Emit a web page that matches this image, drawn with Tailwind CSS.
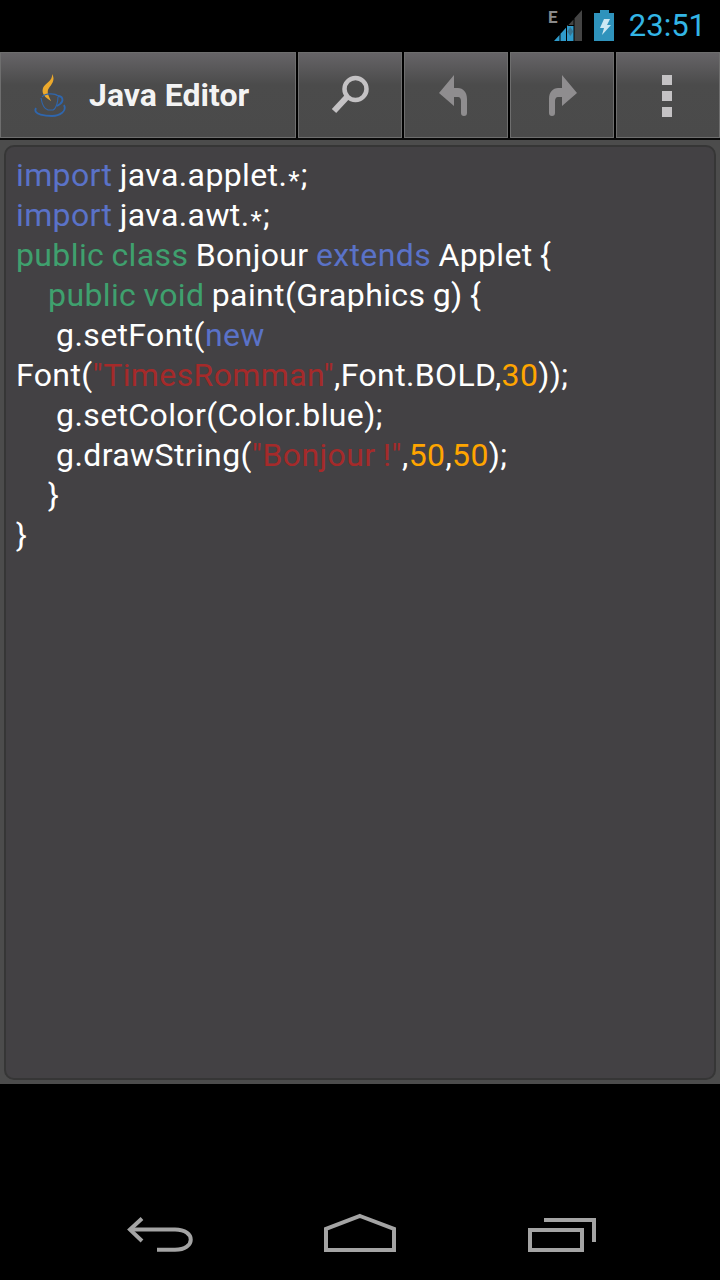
<!DOCTYPE html>
<html>
<head>
<meta charset="utf-8">
<script src="https://cdn.jsdelivr.net/npm/@tailwindcss/browser@4"></script>
</head>
<body class="bg-black">
<div class="w-[720px] h-[1280px] bg-black flex flex-col font-['Roboto',sans-serif] overflow-hidden">
  <!-- status bar -->
  <div class="h-[52px] flex items-center justify-end pr-[14px]">
    <svg width="35" height="33" viewBox="0 0 35 33" class="mr-[11px] mt-[-1px] overflow-visible">
      <text x="0" y="14" font-family="Roboto" font-weight="700" font-size="17" fill="#8a8a8a">E</text>
      <path d="M26.500 9.300 L34 1 V32 H26.500 Z M19 17.600 L25.500 10.400 V16 H19 Z" fill="#444"/>
      <path d="M6 32 L11.500 26 V32 Z M12.500 24.800 L18 18.700 V32 H12.500 Z M19 17 H25.500 V32 H19 Z" fill="#2f9bcb"/>
      <path d="M22.300 18l3 4.500-3 4.500-3-4.500z" fill="#3d5a6b" opacity="0.6"/>
    </svg>
    <svg width="20" height="31" viewBox="0 0 20 31" class="mr-[15px] mt-[-2px]">
      <path d="M6 0h9v3h5v28H0V3h6z" fill="#2f93bc"/>
      <path d="M10 9 H16 L13 15 H17 L8 25 L10 18 H6 Z" fill="#cde8f3"/>
    </svg>
    <span class="text-[31px] leading-none text-[#33b5e5] mt-[-1px]">23:51</span>
  </div>
  <!-- action bar -->
  <div class="h-[88px] flex gap-[2px] border-b-2 border-[#0a0a0a] bg-black">
    <div class="w-[296px] h-[86px] flex items-center border border-[#6e6e6e] bg-[linear-gradient(#666467_0%,#4b4b4b_38%,#4a4a4a_100%)]">
      <svg width="50" height="50" viewBox="0 0 50 50" class="ml-[24px]" fill="none">
        <path d="M27 4 C31 10 26 15 24 18 C21 22 24 26 26 31 C21 28 16 24 18 18 C20 13 28 11 27 4Z" fill="#eca92c"/>
        <path d="M16 28 C17 34 19 39 23 40 H28 C31 39 33 32 33 27 M17 27 C20 23 30 23 33 26" stroke="#2f66ad" stroke-width="1.100"/>
        <path d="M33 26 C38 26 39 31 35 34 L32 36" stroke="#2f66ad" stroke-width="1.800"/>
        <path d="M11 38 C7 45 22 46 27 46 C35 46 42 41 39 35" stroke="#2f66ad" stroke-width="1.800"/>
      </svg>
      <span class="ml-[14px] text-[32px] leading-none font-bold text-white/95">Java Editor</span>
    </div>
    <div class="w-[104px] h-[86px] flex items-center justify-center border border-[#6e6e6e] bg-[linear-gradient(#666467_0%,#4b4b4b_38%,#4a4a4a_100%)]">
      <svg width="40" height="40" viewBox="0 0 40 40" fill="none">
        <circle cx="25.500" cy="14" r="11" stroke="#c4c2c4" stroke-width="4.500"/>
        <path d="M17 22 L4 36" stroke="#c4c2c4" stroke-width="6"/>
      </svg>
    </div>
    <div class="w-[104px] h-[86px] flex items-center justify-center border border-[#6e6e6e] bg-[linear-gradient(#666467_0%,#4b4b4b_38%,#4a4a4a_100%)]">
      <svg width="28" height="41" viewBox="0 0 28 41" class="mr-[6px]">
        <path d="M15 0 L0 18 L15 31 V22 H19 C21 22 22 24 22 26 V38 a3 3 0 0 0 6 0 V24 C28 17 24 13 19 13 H15 Z" fill="#8f8d8f"/>
      </svg>
    </div>
    <div class="w-[104px] h-[86px] flex items-center justify-center border border-[#6e6e6e] bg-[linear-gradient(#666467_0%,#4b4b4b_38%,#4a4a4a_100%)]">
      <svg width="28" height="41" viewBox="0 0 28 41" class="-scale-x-100 ml-[2px]">
        <path d="M15 0 L0 18 L15 31 V22 H19 C21 22 22 24 22 26 V38 a3 3 0 0 0 6 0 V24 C28 17 24 13 19 13 H15 Z" fill="#8f8d8f"/>
      </svg>
    </div>
    <div class="w-[104px] h-[86px] flex flex-col items-center justify-center gap-[6px] pt-[2px] pr-[2px] border border-[#6e6e6e] bg-[linear-gradient(#666467_0%,#4b4b4b_38%,#4a4a4a_100%)]">
      <div class="w-[10px] h-[10px] bg-[#c4c2c4]"></div>
      <div class="w-[10px] h-[10px] bg-[#c4c2c4]"></div>
      <div class="w-[10px] h-[10px] bg-[#c4c2c4]"></div>
    </div>
  </div>
  <!-- editor -->
  <div class="h-[944px] bg-[#4c4c4c] pt-[5px] pb-[4px] px-[4px]">
    <div class="h-full rounded-[10px] border-2 border-[#363636] bg-[#434144] pl-[10px] pr-[8px] pt-[8px] text-[32px] tracking-[0.38px] [word-spacing:-1px] leading-[40px] text-white whitespace-pre-wrap"><span class="text-[#5a72c8]">import</span> java.applet.<span class="inline-block translate-y-[4px] text-[26px] leading-[20px] px-[1px]">*</span>;
<span class="text-[#5a72c8]">import</span> java.awt.<span class="inline-block translate-y-[4px] text-[26px] leading-[20px] px-[1px]">*</span>;
<span class="text-[#3fa06e]">public class</span> Bonjour <span class="text-[#5a72c8]">extends</span> Applet {
<span class="[word-spacing:-0.3px]">    </span><span class="text-[#3fa06e]">public void</span> paint(Graphics g) {
<span class="[word-spacing:-0.3px]">     </span>g.setFont(<span class="text-[#5a72c8]">new</span> Font(<span class="text-[#a52a2a]">"TimesRomman"</span>,Font.BOLD,<span class="text-[#ffa500]">30</span>));
<span class="[word-spacing:-0.3px]">     </span>g.setColor(Color.blue);
<span class="[word-spacing:-0.3px]">     </span>g.drawString(<span class="text-[#a52a2a]">"Bonjour !"</span>,<span class="text-[#ffa500]">50</span>,<span class="text-[#ffa500]">50</span>);
<span class="[word-spacing:-0.3px]">    </span>}
}</div>
  </div>
  <!-- nav bar -->
  <div class="flex-1">
    <div class="flex items-start pl-[127px] pt-[133px]">
      <svg width="68" height="38" viewBox="0 0 68 38" fill="none" stroke="#a4a4a4" stroke-width="4">
        <path d="M15 1.500 L3 12.600 L15 24"/>
        <path d="M3 12.600 H48 C69 12.600 69 32.700 48 32.700 H30"/>
      </svg>
      <svg width="74" height="40" viewBox="0 0 74 40" fill="none" stroke="#a4a4a4" stroke-width="4" class="ml-[128px] mt-[-4px]">
        <path d="M37 3 L71 16 V37 H3 V16 Z"/>
      </svg>
      <svg width="70" height="36" viewBox="0 0 70 36" fill="none" stroke="#a4a4a4" stroke-width="4" class="ml-[130px]">
        <path d="M3 13 H55 V33 H3 Z"/>
        <path d="M17 3 H67 V25"/>
      </svg>
    </div>
  </div>
</div>
</body>
</html>
